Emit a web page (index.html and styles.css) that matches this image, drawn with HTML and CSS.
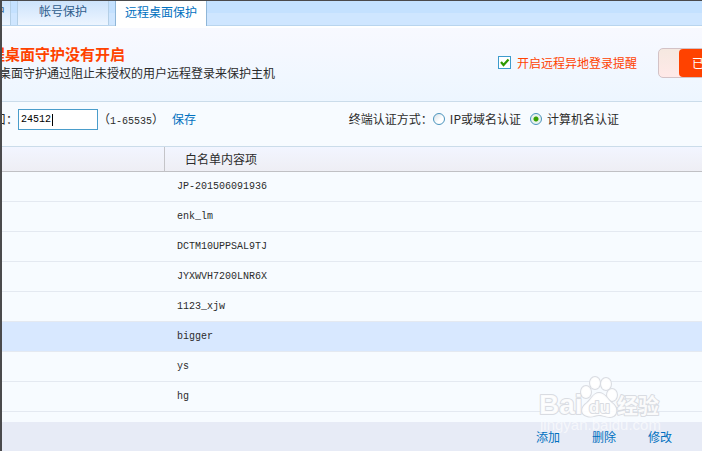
FILE: index.html
```html
<!DOCTYPE html>
<html lang="zh-CN">
  <head>
    <meta charset="UTF-8" />
    <meta name="viewport" content="width=device-width, initial-scale=1.0" />
    <title>远程桌面保护</title>
    <link rel="stylesheet" href="styles.css">
  </head>

  <body>
    <div class="window">
      <nav class="tabs">
        <button type="button" class="tab tab-first">登录保护</button>
        <button type="button" class="tab">帐号保护</button>
        <button type="button" class="tab active">远程桌面保护</button>
      </nav>

      <!-- Protection status -->
      <header class="status">
        <div class="status-text">
          <h1>远程桌面守护没有开启</h1>
          <p>远程桌面守护通过阻止未授权的用户远程登录来保护主机</p>
        </div>
        <label class="remind">
          <input type="checkbox" class="check" checked />
          开启远程异地登录提醒
        </label>
        <button type="button" class="switch"><span>已关闭</span></button>
      </header>

      <!-- Port and authentication settings -->
      <form class="settings">
        <label for="port">端口：</label>
        <span class="port-field">
          <input type="text" id="port" class="port" value="24512" />
        </span>
        <span class="range">（<span class="mono">1-65535</span>）</span>
        <a href="#save" class="save">保存</a>
        <div class="auth">
          <span>终端认证方式：</span>
          <label><input type="radio" name="auth" class="radio" />IP或域名认证</label>
          <label><input type="radio" name="auth" class="radio" checked />计算机名认证</label>
        </div>
      </form>

      <div class="list">
        <table>
          <thead>
            <tr><th class="col-index"></th><th>白名单内容项</th></tr>
          </thead>
          <tbody>
            <tr><td></td><td>JP-201506091936</td></tr>
            <tr><td></td><td>enk_lm</td></tr>
            <tr><td></td><td>DCTM10UPPSAL9TJ</td></tr>
            <tr><td></td><td>JYXWVH7200LNR6X</td></tr>
            <tr><td></td><td>1123_xjw</td></tr>
            <tr class="selected"><td></td><td>bigger</td></tr>
            <tr><td></td><td>ys</td></tr>
            <tr><td></td><td>hg</td></tr>
          </tbody>
        </table>
      </div>

      <footer class="actions">
        <a href="#add">添加</a>
        <a href="#delete">删除</a>
        <a href="#edit">修改</a>
      </footer>

      <svg class="watermark" width="128" height="64" viewBox="0 0 128 64">
        <g class="mark">
          <text x="1" y="40" class="mark-latin">Bai</text>
          <ellipse cx="48" cy="18" rx="5" ry="6" />
          <ellipse cx="57" cy="9" rx="5" ry="6" />
          <ellipse cx="68" cy="10" rx="5" ry="6" />
          <ellipse cx="74" cy="21" rx="5" ry="6" />
          <path d="M61 19C67 19 69 25 74 29C81 34 79 43 72 43C67 43 65 41 61 41C57 41 54 44 49 42C42 40 43 33 49 29C54 25 55 19 61 19Z" />
          <text x="51" y="39" class="mark-du">du</text>
          <text x="79" y="39" class="mark-han">经验</text>
          <text x="2" y="56" class="mark-url">jingyan.baidu.com</text>
        </g>
      </svg>
    </div>
  </body>
</html>
```
FILE: styles.css
```css
* {
  box-sizing: border-box;
}

body {
  margin: 0;
  font: 12px/18px "Noto Sans CJK SC", sans-serif;
  color: #2b2b2b;
}

button,
input {
  font: inherit;
  margin: 0;
}

a {
  color: #0070c0;
  text-decoration: none;
}

.window {
  position: relative;
  display: flex;
  flex-direction: column;
  height: 100vh;
  overflow: hidden;
  border-left: 2px solid #4a4a4c;
  border-top: 1px solid #4a4a4c;
  background: #f7fbff;
}

/* Tabs */
.tabs {
  display: flex;
  flex: none;
  gap: 6px;
  height: 25px;
  margin-left: -52px;
  border-bottom: 1px solid #b9d5ee;
  background: linear-gradient(#c4e1ff 50%, #cfe6ff 50%);
}

.tab {
  width: 92px;
  padding: 0 0 4px;
  border: 1px solid #b4cfe6;
  border-width: 0 1px;
  background: linear-gradient(#cde3fb, #edf5ff);
  color: #2f5d8c;
  white-space: nowrap;
}

.tab-first {
  width: 61px;
}

.tab.active {
  height: 25px;
  border-color: #8fb6d8;
  background: #fff;
  color: #0070c0;
}

/* Protection status */
.status {
  display: flex;
  flex: none;
  align-items: center;
  height: 76px;
  margin-left: -27px;
  padding-bottom: 4px;
  border-bottom: 1px solid #cbdcea;
  border-top: 2px solid #fff;
  background: linear-gradient(#f8f9ff, #edf6ff);
}

.status-text {
  flex: 1;
  white-space: nowrap;
}

h1 {
  margin: 0;
  font-size: 15px;
  line-height: 20px;
  color: #ff4200;
}

p {
  margin: 0;
}

.remind {
  display: flex;
  align-items: center;
  gap: 6px;
  margin-right: 21px;
  color: #ff4200;
}

.check {
  appearance: none;
  width: 13px;
  height: 13px;
  border: 1px solid #3d9bcc;
  background: #fff url("data:image/svg+xml,%3Csvg xmlns='http://www.w3.org/2000/svg' viewBox='0 0 11 11'%3E%3Cpath d='M2 5l2.5 3L9.5 2.5' fill='none' stroke='%232f9a00' stroke-width='2.2'/%3E%3C/svg%3E");
}

.switch {
  width: 72px;
  height: 30px;
  margin-right: -28px;
  padding: 0 0 0 20px;
  border: 1px solid #d3c2c6;
  border-radius: 5px;
  background: linear-gradient(#f5e8e0, #ffe9e8);
  color: #fff;
}

.switch span {
  display: block;
  padding-left: 13px;
  border-radius: 4px 0 0 4px;
  background: #ff4200;
  line-height: 28px;
  text-align: left;
  white-space: nowrap;
  overflow: hidden;
}

/* Port and authentication settings */
.settings {
  display: flex;
  flex: none;
  align-items: center;
  height: 45px;
  margin-left: -20px;
  padding-bottom: 10px;
  border-bottom: 1px solid #cbdcea;
}

.port-field {
  position: relative;
}

.port {
  display: block;
  width: 80px;
  height: 21px;
  padding: 0 2px;
  border: 1px solid #4a9dcb;
  outline: none;
  background: #fff;
  color: #000;
  font: 10px "Liberation Mono", monospace;
}

/* Text cursor after the port number */
.port-field::after {
  content: "";
  position: absolute;
  left: 34px;
  top: 5px;
  width: 1px;
  height: 12px;
  background: #000;
}

.mono {
  font: 10px "Liberation Mono", monospace;
}

.save {
  margin-left: 8px;
}

.auth {
  display: flex;
  align-items: center;
  gap: 9px;
  margin-left: auto;
  margin-right: 83px;
}

.auth > span {
  margin-right: -9px;
}

.auth label {
  display: flex;
  align-items: center;
  gap: 5px;
}

.radio {
  appearance: none;
  width: 12px;
  height: 12px;
  border: 1px solid #4a94bd;
  border-radius: 50%;
  background: linear-gradient(135deg, #d5e0e8, #fff 60%);
}

.radio:checked {
  background: radial-gradient(circle, #37a000 2px, #e9f2ec 3px);
}

/* Whitelist */
.list {
  flex: 1;
  min-height: 0;
  overflow: hidden;
}

table {
  width: 100%;
  table-layout: fixed;
  border-collapse: separate;
  border-spacing: 0;
}

th {
  height: 25px;
  padding: 0 20px;
  border-bottom: 1px solid #c0c0c4;
  background: linear-gradient(#f2f5ff, #eeeef4);
  font-weight: normal;
  text-align: left;
}

.col-index {
  width: 163px;
  border-right: 1px solid #c4c4c8;
}

td {
  height: 30px;
  padding: 0 12px;
  border-bottom: 1px solid #e4e9f1;
  font: 10px "Liberation Mono", monospace;
}

.selected td {
  background: #d8e8ff;
}

.actions {
  display: flex;
  flex: none;
  align-items: center;
  justify-content: flex-end;
  gap: 32px;
  height: 29px;
  padding-right: 30px;
  background: #e7ebf6;
}

/* Watermark over the lower right corner */
.watermark {
  position: absolute;
  right: 36px;
  bottom: 13px;
  pointer-events: none;
}

.mark {
  fill: #fff;
  fill-opacity: 0.9;
  stroke: #d9dce2;
  stroke-width: 2;
  stroke-linejoin: round;
  paint-order: stroke;
  font-family: "Liberation Sans", sans-serif;
  font-weight: bold;
}

.mark-latin {
  font-size: 28px;
}

.mark-du {
  font-size: 17px;
}

.mark-han {
  font-family: "Noto Sans CJK SC", sans-serif;
  font-size: 21px;
}

.mark-url {
  font-size: 15px;
  font-weight: normal;
  fill-opacity: 0.6;
  stroke-width: 0;
}
```
